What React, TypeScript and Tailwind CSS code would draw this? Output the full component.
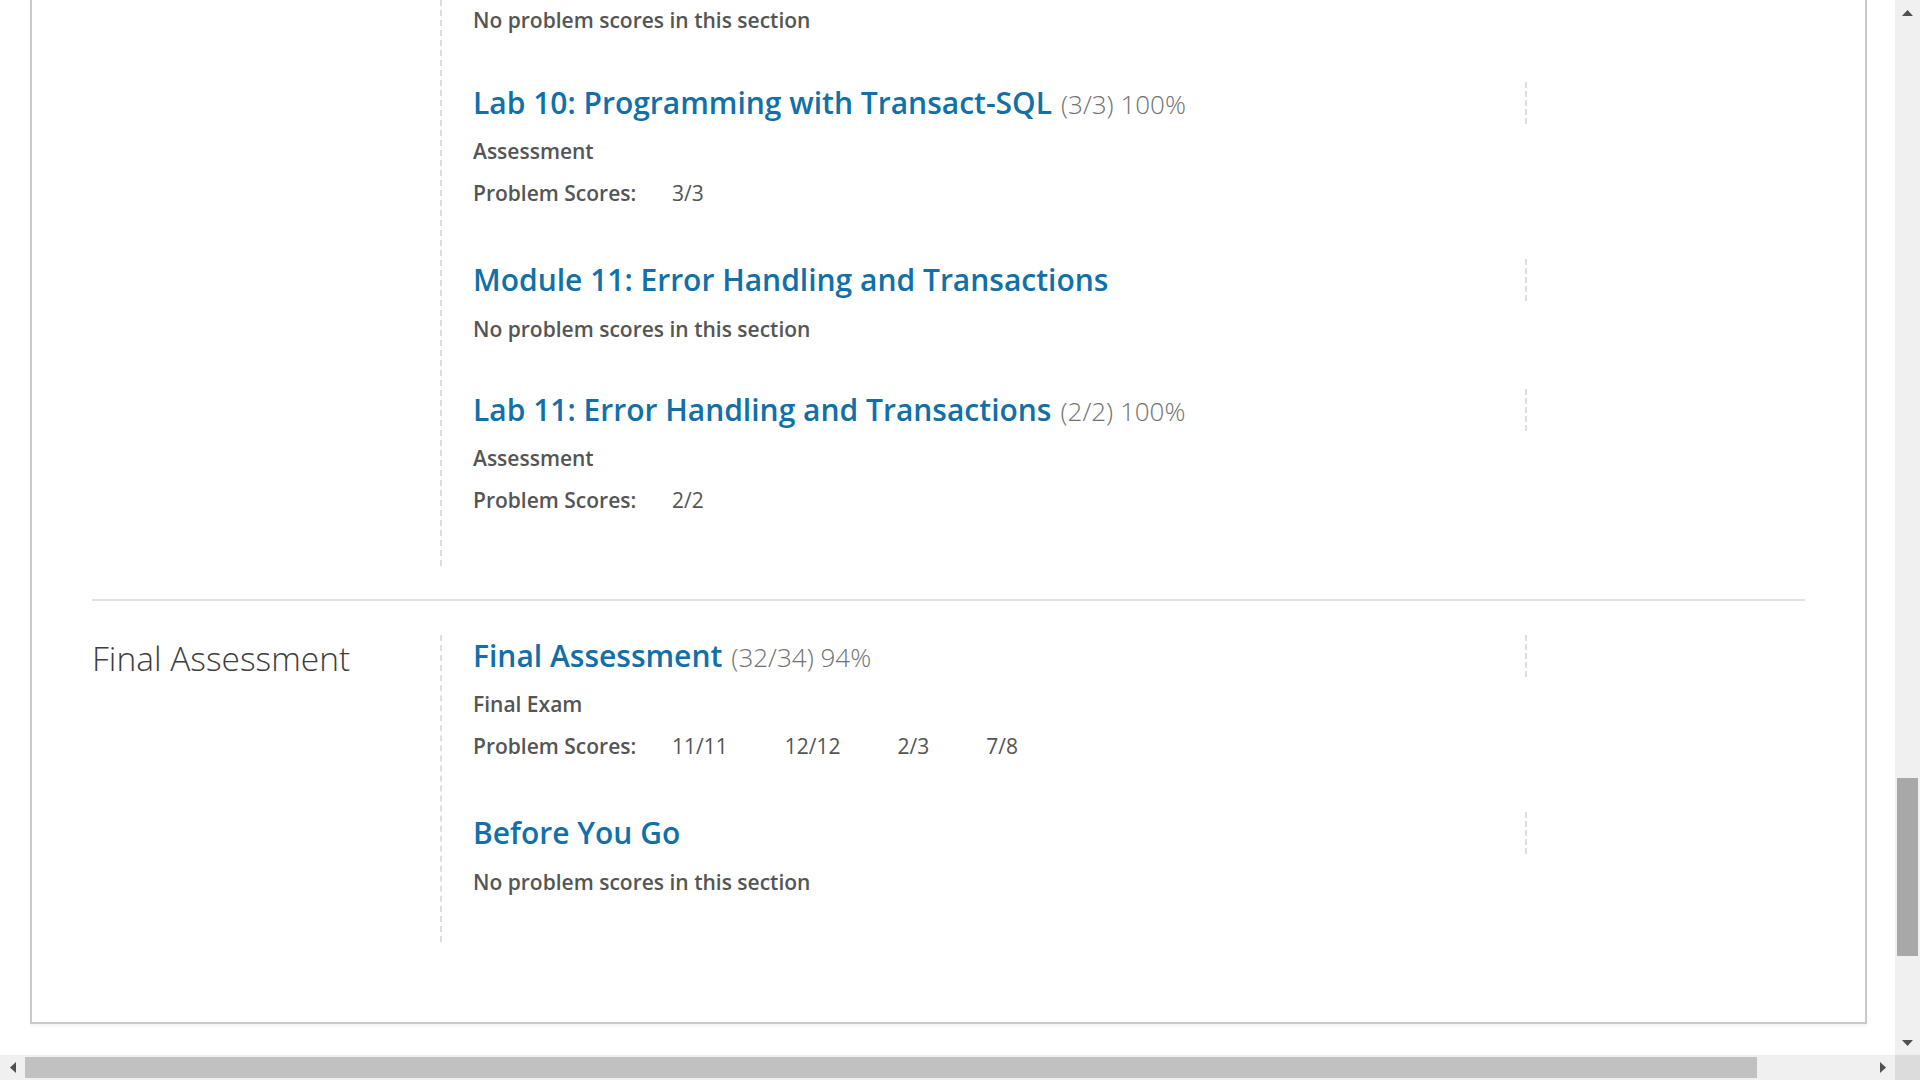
import React from "react"

type Item = {
  title: string
  score?: string
  kind?: string
  scores?: string[]
}

type Chapter = {
  name?: string
  lead?: string
  items: Item[]
}

const chapters: Chapter[] = [
  {
    lead: "No problem scores in this section",
    items: [
      { title: "Lab 10: Programming with Transact-SQL", score: "(3/3) 100%", kind: "Assessment", scores: ["3/3"] },
      { title: "Module 11: Error Handling and Transactions" },
      { title: "Lab 11: Error Handling and Transactions", score: "(2/2) 100%", kind: "Assessment", scores: ["2/2"] },
    ],
  },
  {
    name: "Final Assessment",
    items: [
      {
        title: "Final Assessment",
        score: "(32/34) 94%",
        kind: "Final Exam",
        scores: ["11/11", "12/12", "2/3", "7/8"],
      },
      { title: "Before You Go" },
    ],
  },
]

const SectionItem: React.FC<{ item: Item }> = ({ item }) => (
  <div className="pb-[45px]">
    <div className="w-[1054px] border-r-2 border-dashed border-[#dedede]">
      <h3 className="h-[42px] whitespace-nowrap text-[30px] font-semibold leading-[42px] text-[#1170a8]">
        {item.title}
        {item.score && (
          <span className="ml-[9px] text-[26px] font-light text-[#727272]">{item.score}</span>
        )}
      </h3>
    </div>
    {item.scores ? (
      <>
        <p className="mt-[12px] text-[21px] font-semibold leading-[30px] text-[#555]">{item.kind}</p>
        <div className="mb-[6px] mt-[12px] flex text-[21px] leading-[30px] text-[#555]">
          <span className="w-[199px] font-semibold">Problem Scores:</span>
          <div className="flex gap-[57px]">
            {item.scores.map((s, i) => (
              <span key={i}>{s}</span>
            ))}
          </div>
        </div>
      </>
    ) : (
      <p className="mt-[13px] text-[21px] font-semibold leading-[30px] text-[#555]">
        No problem scores in this section
      </p>
    )}
  </div>
)

const Arrow: React.FC<{ dir: "up" | "down" | "left" | "right" }> = ({ dir }) => {
  const pts = {
    up: "0,6 11,6 5.5,0",
    down: "0,0 11,0 5.5,6",
    left: "6,0 6,11 0,5.5",
    right: "0,0 0,11 6,5.5",
  }[dir]
  const vertical = dir === "up" || dir === "down"
  return (
    <svg width={vertical ? 11 : 6} height={vertical ? 6 : 11} viewBox={vertical ? "0 0 11 6" : "0 0 6 11"}>
      <polygon points={pts} fill="#505050" />
    </svg>
  )
}

export default function App() {
  return (
    <div className="flex h-[1080px] w-[1920px] flex-col overflow-hidden bg-white font-['Open_Sans',sans-serif]">
      <div className="flex min-h-0 flex-1">
        <div className="min-w-0 flex-1 overflow-hidden">
          <div className="ml-[30px] w-[1837px] border-2 border-t-0 border-[#c9c9c9] px-[60px] pb-[80px] shadow-[0_2px_3px_rgba(0,0,0,0.05)]">
            {chapters.map((ch, ci) => (
              <div
                key={ci}
                className={
                  ci === 0
                    ? "flex border-b-2 border-[#e2e2e2] pb-[33px]"
                    : "flex pt-[34px]"
                }
              >
                <div className="w-[348px] shrink-0">
                  {ch.name && (
                    <h2 className="text-[33.5px] font-light leading-[46px] text-[#3d3d3d]">{ch.name}</h2>
                  )}
                </div>
                <div className="border-l-2 border-dashed border-[#dedede] pl-[31px]">
                  {ch.lead && (
                    <p className="pb-[47px] pt-[5px] text-[21px] font-semibold leading-[30px] text-[#555]">
                      {ch.lead}
                    </p>
                  )}
                  {ch.items.map((it, i) => (
                    <SectionItem key={i} item={it} />
                  ))}
                </div>
              </div>
            ))}
          </div>
        </div>
        <div className="flex w-[25px] flex-col bg-[#f0f0f0]">
          <div className="flex h-[25px] items-center justify-center">
            <Arrow dir="up" />
          </div>
          <div className="flex flex-1 flex-col px-[2px] pt-[753px]">
            <div className="h-[178px] bg-[#a8a8a8]" />
          </div>
          <div className="flex h-[25px] items-center justify-center">
            <Arrow dir="down" />
          </div>
        </div>
      </div>
      <div className="flex h-[25px]">
        <div className="flex flex-1 bg-[#f0f0f0]">
          <div className="flex w-[25px] items-center justify-center">
            <Arrow dir="left" />
          </div>
          <div className="flex flex-1 py-[2px]">
            <div className="w-[1732px] bg-[#c1c1c1]" />
          </div>
          <div className="flex w-[25px] items-center justify-center">
            <Arrow dir="right" />
          </div>
        </div>
        <div className="w-[25px] bg-[#dcdcdc]" />
      </div>
    </div>
  )
}
